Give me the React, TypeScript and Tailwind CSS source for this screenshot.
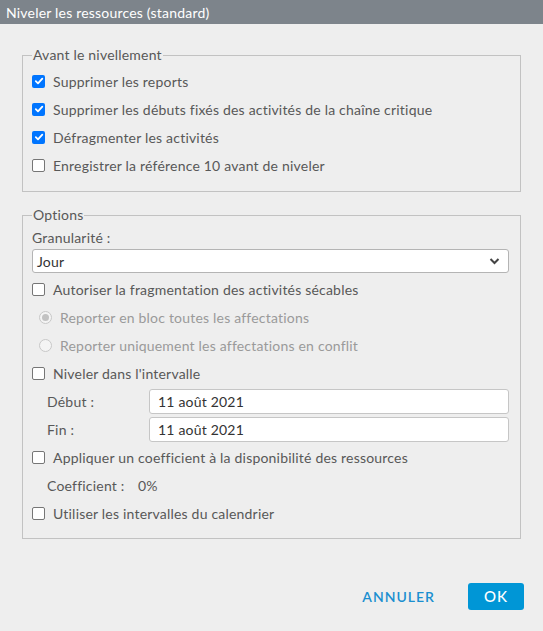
import React from "react";

function Check({ checked }: { checked?: boolean }) {
  return checked ? (
    <span className="flex h-[13px] w-[13px] shrink-0 items-center justify-center rounded-[2px] bg-[#0075ff]">
      <svg width="10" height="10" viewBox="0 0 10 10">
        <path d="M1.8 5.2 L4 7.4 L8.3 2.6" fill="none" stroke="white" strokeWidth="1.8" strokeLinecap="round" strokeLinejoin="round" />
      </svg>
    </span>
  ) : (
    <span className="h-[13px] w-[13px] shrink-0 rounded-[2px] border border-[#767676] bg-white" />
  );
}

function CheckRow({ label, checked }: { label: string; checked?: boolean }) {
  return (
    <div className="flex h-[28px] items-center gap-[8px]">
      <Check checked={checked} />
      <span>{label}</span>
    </div>
  );
}

function Radio({ label, selected }: { label: string; selected?: boolean }) {
  return (
    <div className="flex h-[28px] items-center gap-[8px] pl-[7px] text-[#9a9a9a]">
      <span className="flex h-[13px] w-[13px] shrink-0 items-center justify-center rounded-full border border-[#c8c8c8] bg-[#f4f4f4]">
        {selected && <span className="h-[7px] w-[7px] rounded-full bg-[#c2c2c2]" />}
      </span>
      <span>{label}</span>
    </div>
  );
}

function DateRow({ label, value }: { label: string; value: string }) {
  return (
    <div className="flex h-[28px] items-center pl-[15px]">
      <span className="w-[102px] shrink-0">{label}</span>
      <div className="flex h-[25px] flex-1 items-center rounded-[3px] border border-[#c6c6c6] bg-white pl-[8px] text-[#333]">
        {value}
      </div>
    </div>
  );
}

export default function App() {
  return (
    <div
      className="flex h-[631px] w-[543px] flex-col bg-[#eeeeee] text-[14px] tracking-[0.2px] text-[#585858]"
      style={{ fontFamily: "Lato, 'Open Sans', sans-serif" }}
    >
      <div className="flex h-[24px] items-center bg-[#7d848b] pl-[6px] text-[14px] text-white">
        Niveler les ressources (standard)
      </div>

      <div className="flex flex-col gap-[15px] px-[22px] pt-[23px]">
        <fieldset className="m-0 border border-[#c2c2c2] pb-[12px] pl-[9px] pr-[11px] pt-[4px]">
          <legend className="px-[1px] leading-[16px]">Avant le nivellement</legend>
          <CheckRow label="Supprimer les reports" checked />
          <CheckRow label="Supprimer les débuts fixés des activités de la chaîne critique" checked />
          <CheckRow label="Défragmenter les activités" checked />
          <CheckRow label="Enregistrer la référence 10 avant de niveler" />
        </fieldset>

        <fieldset className="m-0 border border-[#c2c2c2] pb-[11px] pl-[9px] pr-[11px] pt-[2px]">
          <legend className="px-[1px] leading-[16px]">Options</legend>
          <div className="flex h-[24px] items-center">Granularité :</div>
          <div className="flex h-[24px] items-center justify-between rounded-[3px] border border-[#b4b4b4] bg-white pl-[4px] pr-[8px] text-[#333]">
            <span>Jour</span>
            <svg width="11" height="8" viewBox="0 0 11 8">
              <path d="M1.5 2 L5.5 6 L9.5 2" fill="none" stroke="#444" strokeWidth="2" />
            </svg>
          </div>
          <div className="mt-[2px]">
            <CheckRow label="Autoriser la fragmentation des activités sécables" />
          </div>
          <Radio label="Reporter en bloc toutes les affectations" selected />
          <Radio label="Reporter uniquement les affectations en conflit" />
          <CheckRow label="Niveler dans l'intervalle" />
          <DateRow label="Début :" value="11 août 2021" />
          <DateRow label="Fin :" value="11 août 2021" />
          <CheckRow label="Appliquer un coefficient à la disponibilité des ressources" />
          <div className="flex h-[28px] items-center pl-[15px]">
            <span className="w-[91px] shrink-0">Coefficient :</span>
            <span>0%</span>
          </div>
          <CheckRow label="Utiliser les intervalles du calendrier" />
        </fieldset>
      </div>

      <div className="mt-auto flex items-center justify-end gap-[33px] pb-[21px] pr-[19px]">
        <button className="text-[14px] font-semibold tracking-[1px] text-[#1a8fd0]">ANNULER</button>
        <button className="flex h-[27px] w-[56px] items-center justify-center rounded-[3px] bg-[#0096d6] text-[15px] font-medium tracking-[1px] text-white">
          OK
        </button>
      </div>
    </div>
  );
}
